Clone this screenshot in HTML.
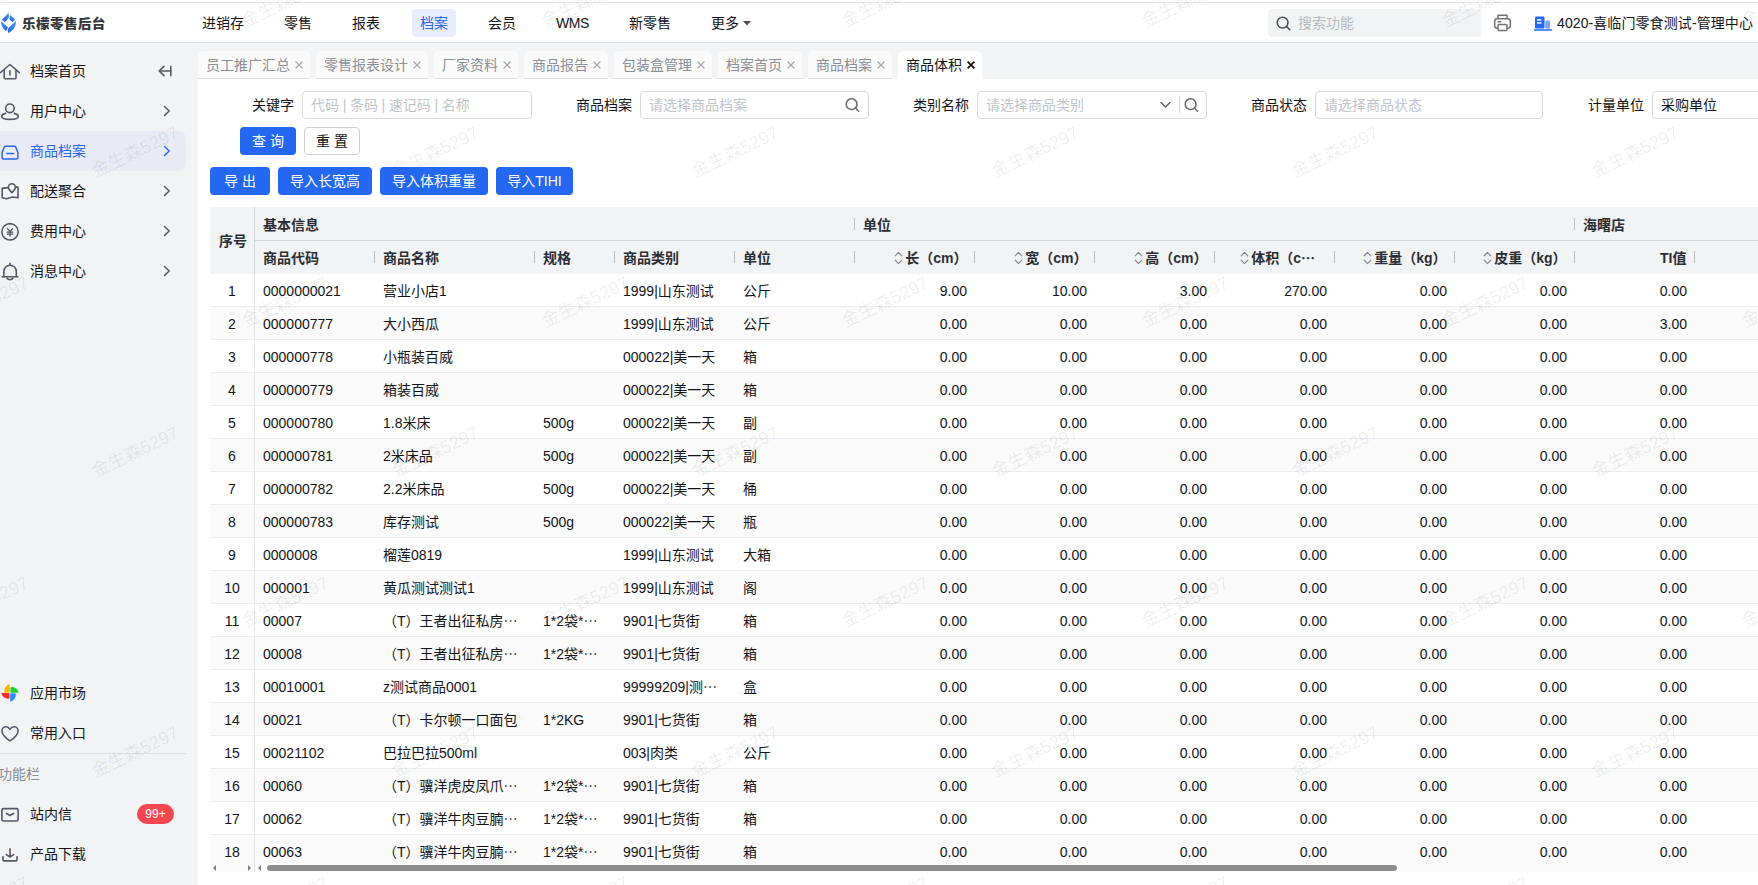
<!DOCTYPE html>
<html lang="zh-CN">
<head>
<meta charset="utf-8">
<title>商品体积</title>
<style>
*{box-sizing:border-box;margin:0;padding:0}
html,body{width:1758px;height:885px;overflow:hidden;background:#fff}
body{position:relative;font-family:"Liberation Sans","Noto Sans CJK SC",sans-serif;font-size:14px;color:#121418;line-height:20px}
.abs{position:absolute}
svg{display:block}
/* header */
#topline{left:0;top:0;width:1758px;height:3px;background:#fff;border-bottom:1px solid #e6e6e7}
#header{left:0;top:3px;width:1758px;height:40px;background:#fff;border-bottom:1px solid #dbdcde}
#logo{left:0;top:9px;width:18px;height:24px}
#brand{left:21.8px;top:12px;font-size:13.4px;font-weight:900;letter-spacing:.3px;color:#333539;line-height:24px;white-space:nowrap;transform:scale(1.02,.96);transform-origin:0 18px}
.nav{top:9px;height:28px;line-height:28px;padding:0 8px;border-radius:4px;white-space:nowrap;color:#121418}
.nav.on{background:#e8edfb;color:#2b67ec}
#search{left:1268px;top:9px;width:213px;height:28px;border-radius:4px;background:#f2f3f5}
#search span{position:absolute;left:30px;top:0;line-height:28px;color:#b5bac3}
#org{left:1557px;top:9px;line-height:28px;white-space:nowrap;color:#121418;letter-spacing:.09px}
/* sidebar */
#side{left:0;top:43px;width:198px;height:842px;background:#f2f3f5}
.mi{left:0;width:186px;height:40px}
.mi .t{position:absolute;left:30px;top:0;line-height:40px;color:#121418;white-space:nowrap}
.mi .ic{position:absolute;left:0;top:10px;width:20px;height:20px}
.mi .ar{position:absolute;left:160px;top:13px;width:14px;height:14px}
.mi.on{background:#e8ebf6;border-radius:0 8px 8px 0}
.mi.on .t{color:#2b67ec}
/* tabs */
#tabbar{left:198px;top:43px;width:1560px;height:36px;background:#f2f3f5}
.tab{top:51px;height:28px;background:#fafafa;border-radius:5px 5px 0 0;border-bottom:1px solid #dcdee3;color:#8a8f98;line-height:29px;padding-left:8px;white-space:nowrap}
.tab svg{position:absolute;right:7px;top:10px;width:8px;height:8px;fill:none;stroke:#a0a3a8;stroke-width:1.3}
.tab.on{background:#fff;border-bottom-color:#fff;color:#121418}
.tab.on svg{stroke:#111;stroke-width:1.7}
#content{left:198px;top:79px;width:1560px;height:806px;background:#fff}
/* form */
.lb{top:91px;height:28px;line-height:28px;white-space:nowrap;color:#121418;text-align:right}
.ip{top:91px;height:28px;border:1px solid #d8d9dc;border-radius:4px;background:#fff;line-height:26px;padding-left:8px;color:#c0c4cc;white-space:nowrap;overflow:hidden}
.btn{height:28px;line-height:28px;border-radius:4px;text-align:center;color:#fff;background:#2468f2;white-space:nowrap}
.btn.w{background:#fff;color:#121418;border:1px solid #c9cdd4;line-height:26px}
/* table */
#thead{left:210px;top:207px;width:1548px;height:67px;background:#f2f3f5}
.th{position:absolute;font-weight:bold;color:#2a2d33;white-space:nowrap;line-height:33px;height:33px}
.sep{position:absolute;width:1px;height:12px;background:#bdc1c8}
.tr{position:absolute;left:210px;width:1548px;height:33px;border-bottom:1px solid #ebecef;line-height:32px;white-space:nowrap}
.tr.even{background:#fafafa}
.c{position:absolute;top:1px;height:31px;overflow:hidden}
.c0{left:0;width:44px;text-align:center}
.c1{left:53px}.c2{left:173px}.c3{left:333px}.c4{left:413px}.c5{left:533px}
.n{width:113px;text-align:right}
.n0{left:644px}.n1{left:764px}.n2{left:884px}.n3{left:1004px}.n4{left:1124px}.n5{left:1244px}.n6{left:1364px}
.el{font-family:"Noto Sans CJK SC",sans-serif;line-height:0}
.wm{position:absolute;width:120px;height:24px;text-align:center;color:rgba(0,0,0,.075);font-size:18px;transform:rotate(-25.5deg);transform-origin:center;white-space:nowrap;pointer-events:none;line-height:24px;z-index:9}
</style>
</head>
<body>
<div id="topline" class="abs"></div>
<div id="header" class="abs"></div>

<svg id="logo" class="abs" style="left:0;top:12px;width:18px;height:22px" viewBox="0 0 18 22">
<defs><linearGradient id="lg" x1="0" y1="0" x2="0" y2="1"><stop offset="0" stop-color="#4c93fb"/><stop offset="1" stop-color="#2468f2"/></linearGradient></defs>
<path d="M8.7 0.8 L1.9 7.4 L4.4 9.9 C6.8 8.6 8.5 6.6 8.9 4.4 Z" fill="url(#lg)"/>
<path d="M10.2 2.7 L15 7.4 L12.7 9.9 C11 9.1 9.7 7.9 9.3 6.5 Z" fill="url(#lg)"/>
<path d="M1.1 8.9 C0.8 13 3.3 17.2 6.4 19.1 L7.9 15.3 Z" fill="url(#lg)"/>
<path d="M15.9 8.9 C16.4 14 12.8 19 8.3 21 C7.7 18.8 7.7 17.6 8.1 16.3 Z" fill="url(#lg)"/>
</svg>
<div id="brand" class="abs">乐檬零售后台</div>
<div class="abs nav" style="left:194px">进销存</div>
<div class="abs nav" style="left:276px">零售</div>
<div class="abs nav" style="left:344px">报表</div>
<div class="abs nav on" style="left:412px">档案</div>
<div class="abs nav" style="left:480px">会员</div>
<div class="abs nav" style="left:548px;letter-spacing:-.45px">WMS</div>
<div class="abs nav" style="left:621px">新零售</div>
<div class="abs nav" style="left:703px">更多<svg class="abs" style="left:39.5px;top:11.5px;width:8px;height:5px" viewBox="0 0 8 5"><path d="M0 0H8L4 4.6Z" fill="#4a4c52"/></svg></div>
<div id="search" class="abs"><svg class="abs" style="left:7.5px;top:6.5px;width:15px;height:15px" viewBox="0 0 15 15" fill="none" stroke="#4a4d54" stroke-width="1.5"><circle cx="6.6" cy="6.6" r="5.4"/><path d="M10.6 10.6L13.8 13.8" stroke-linecap="round"/></svg><span>搜索功能</span></div>
<svg class="abs" style="left:1493px;top:13px;width:19px;height:19px" viewBox="0 0 19 19" fill="none" stroke="#6f7277" stroke-width="1.5" stroke-linejoin="round"><path d="M5 5.8V2.2h9v3.6"/><rect x="1.7" y="5.8" width="15.6" height="9.4" rx="2.4"/><rect x="5" y="11.4" width="9" height="6.2" rx="1" fill="#fff"/><path d="M5.2 8.7h2.6" stroke-linecap="round"/></svg>
<svg class="abs" style="left:1534px;top:16px;width:18px;height:15px" viewBox="0 0 18 15"><rect x="1" y="0.5" width="9.5" height="12" rx="1.2" fill="#2468f2"/><rect x="11.2" y="4.5" width="4.8" height="8" rx="1" fill="#7aa6f8"/><rect x="3" y="3.2" width="4.5" height="1.4" fill="#fff"/><rect x="3" y="6.2" width="4.5" height="1.4" fill="#fff"/><rect x="0" y="13.2" width="18" height="1.5" fill="#2468f2"/></svg>
<div id="org" class="abs">4020-喜临门零食测试-管理中心</div>

<div id="side" class="abs"></div>

<div class="abs mi" style="top:51px"><svg class="ic" viewBox="0 0 20 20" fill="none" stroke="#545866" stroke-width="1.6" stroke-linecap="round" stroke-linejoin="round"><path d="M0.4 11.7L9.9 3.5L19.4 11.7"/><path d="M4.2 9.6V16.7a1 1 0 0 0 1 1H15a1 1 0 0 0 1-1V9.6"/><path d="M9.9 9.7V14"/></svg><span class="t">档案首页</span><svg class="abs" style="left:158px;top:14px;width:14px;height:12px" viewBox="0 0 14 12" fill="none" stroke="#56585e" stroke-width="1.6" stroke-linecap="round" stroke-linejoin="round"><path d="M6 1.4L1.2 6L6 10.6"/><path d="M1.6 6H12.8"/><path d="M12.8 1.4V10.6"/></svg></div>
<div class="abs mi" style="top:91px"><svg class="ic" viewBox="0 0 20 20" fill="none" stroke="#545866" stroke-width="1.6" stroke-linecap="round" stroke-linejoin="round"><circle cx="9.9" cy="7.3" r="4.3"/><path d="M5.6 12.4C3 13 1.7 14.2 1.7 15.5C1.7 17.2 5 18.4 10 18.4S18.3 17.2 18.3 15.5C18.3 14.2 17 13 14.4 12.4"/></svg><span class="t">用户中心</span><svg class="ar" viewBox="0 0 14 14" fill="none" stroke="#56585e" stroke-width="1.5" stroke-linecap="round" stroke-linejoin="round"><path d="M4.5 2.5L9.2 7L4.5 11.5"/></svg></div>
<div class="abs mi on" style="top:131px"><svg class="ic" viewBox="0 0 20 20" fill="none" stroke="#2b67ec" stroke-width="1.5" stroke-linecap="round" stroke-linejoin="round"><path d="M5.7 5.3H14.3a1.6 1.6 0 0 1 1.5 1L17.9 11.5V16.4a1.5 1.5 0 0 1-1.5 1.5H3.6a1.5 1.5 0 0 1-1.5-1.5V11.5L4.2 6.3a1.6 1.6 0 0 1 1.5-1Z"/><path d="M6.6 12.4H13.6"/></svg><span class="t">商品档案</span><svg class="ar" viewBox="0 0 14 14" fill="none" stroke="#2b67ec" stroke-width="1.5" stroke-linecap="round" stroke-linejoin="round"><path d="M4.5 2.5L9.2 7L4.5 11.5"/></svg></div>
<div class="abs mi" style="top:171px"><svg class="ic" viewBox="0 0 20 20" fill="none" stroke="#545866" stroke-width="1.6" stroke-linecap="round" stroke-linejoin="round"><path d="M7.6 6.6L2.2 7.4V16.8L6.4 17.8L12.8 16L18 16.8V6.4L16 5.9"/><path d="M11.9 11.6C9.6 9.4 8.4 8 8.4 6.2A3.5 3.5 0 0 1 15.4 6.2C15.4 8 14.2 9.4 11.9 11.6Z"/></svg><span class="t">配送聚合</span><svg class="ar" viewBox="0 0 14 14" fill="none" stroke="#56585e" stroke-width="1.5" stroke-linecap="round" stroke-linejoin="round"><path d="M4.5 2.5L9.2 7L4.5 11.5"/></svg></div>
<div class="abs mi" style="top:211px"><svg class="ic" viewBox="0 0 20 20" fill="none" stroke="#545866" stroke-width="1.6" stroke-linecap="round" stroke-linejoin="round"><circle cx="10" cy="10.8" r="8.2"/><path d="M7.5 7.6L10 10.6L12.5 7.6M10 10.6V15.2M7.2 11.2H12.8M7.2 13.1H12.8" stroke-width="1.3"/></svg><span class="t">费用中心</span><svg class="ar" viewBox="0 0 14 14" fill="none" stroke="#56585e" stroke-width="1.5" stroke-linecap="round" stroke-linejoin="round"><path d="M4.5 2.5L9.2 7L4.5 11.5"/></svg></div>
<div class="abs mi" style="top:251px"><svg class="ic" viewBox="0 0 20 20" fill="none" stroke="#545866" stroke-width="1.6" stroke-linecap="round" stroke-linejoin="round"><path d="M10 2.4V4"/><path d="M3.9 15.7V10.4A6.2 6.2 0 0 1 16.3 10.4V15.7"/><path d="M2.2 15.7H17.8"/><path d="M7 17.2C7.6 18.3 8.8 18.7 10 18.7S12.4 18.3 13 17.2"/></svg><span class="t">消息中心</span><svg class="ar" viewBox="0 0 14 14" fill="none" stroke="#56585e" stroke-width="1.5" stroke-linecap="round" stroke-linejoin="round"><path d="M4.5 2.5L9.2 7L4.5 11.5"/></svg></div>

<div class="abs mi" style="top:673px"><svg class="ic" viewBox="0 0 20 20"><g id="pw"><path id="pt" d="M9.8 1.2V8.4C9.8 9 9.4 9.4 8.8 9.4H5.2C4.4 9.4 4.2 8.8 4.2 8C4.2 4.6 6.6 1.8 9.8 1.2Z" fill="#ffb400"/><path d="M9.8 1.2V8.4C9.8 9 9.4 9.4 8.8 9.4H5.2C4.4 9.4 4.2 8.8 4.2 8C4.2 4.6 6.6 1.8 9.8 1.2Z" fill="#22d12c" transform="rotate(90 10 9.85)"/><path d="M9.8 1.2V8.4C9.8 9 9.4 9.4 8.8 9.4H5.2C4.4 9.4 4.2 8.8 4.2 8C4.2 4.6 6.6 1.8 9.8 1.2Z" fill="#2f8ffa" transform="rotate(180 10 9.85)"/><path d="M9.8 1.2V8.4C9.8 9 9.4 9.4 8.8 9.4H5.2C4.4 9.4 4.2 8.8 4.2 8C4.2 4.6 6.6 1.8 9.8 1.2Z" fill="#ff2b2b" transform="rotate(270 10 9.85)"/></g></svg><span class="t">应用市场</span></div>
<div class="abs mi" style="top:713px"><svg class="ic" viewBox="0 0 20 20" fill="none" stroke="#545866" stroke-width="1.6" stroke-linecap="round" stroke-linejoin="round"><path d="M10 17.9C5.4 14.7 1.9 11.5 1.9 7.9C1.9 5.3 3.9 3.7 5.9 3.7C7.6 3.7 9.1 4.7 10 6.3C10.9 4.7 12.4 3.7 14.1 3.7C16.1 3.7 18.1 5.3 18.1 7.9C18.1 11.5 14.6 14.7 10 17.9Z"/></svg><span class="t">常用入口</span></div>
<div class="abs" style="left:0;top:753px;width:186px;height:1px;background:#dcdee3"></div>
<div class="abs" style="left:-2px;top:764px;line-height:20px;color:#8a8d93">功能栏</div>
<div class="abs mi" style="top:794px"><svg class="ic" viewBox="0 0 20 20" fill="none" stroke="#545866" stroke-width="1.6" stroke-linecap="round" stroke-linejoin="round"><rect x="1.9" y="4.6" width="16.2" height="12.4" rx="1.6"/><path d="M6.4 9.5L10 11.5L13.6 9.5"/></svg><span class="t">站内信</span><span class="abs" style="left:137px;top:10px;width:37px;height:20px;border-radius:10px;background:#f5474f;color:#fff;font-size:12px;line-height:20px;text-align:center">99+</span></div>
<div class="abs mi" style="top:834px"><svg class="ic" viewBox="0 0 20 20" fill="none" stroke="#545866" stroke-width="1.6" stroke-linecap="round" stroke-linejoin="round"><path d="M10 4.8V12.8M6.4 10.6L10 13L13.6 10.6"/><path d="M3 12.8V15.9a1 1 0 0 0 1 1H16a1 1 0 0 0 1-1V12.8"/></svg><span class="t">产品下载</span></div>

<div id="tabbar" class="abs"></div>
<div id="content" class="abs"></div>
<div class="abs tab" style="left:198px;width:112px">员工推广汇总<svg viewBox="0 0 8 8"><path d="M0.6 0.6L7.4 7.4M7.4 0.6L0.6 7.4"/></svg></div>
<div class="abs tab" style="left:316px;width:112px">零售报表设计<svg viewBox="0 0 8 8"><path d="M0.6 0.6L7.4 7.4M7.4 0.6L0.6 7.4"/></svg></div>
<div class="abs tab" style="left:434px;width:84px">厂家资料<svg viewBox="0 0 8 8"><path d="M0.6 0.6L7.4 7.4M7.4 0.6L0.6 7.4"/></svg></div>
<div class="abs tab" style="left:524px;width:84px">商品报告<svg viewBox="0 0 8 8"><path d="M0.6 0.6L7.4 7.4M7.4 0.6L0.6 7.4"/></svg></div>
<div class="abs tab" style="left:614px;width:98px">包装盒管理<svg viewBox="0 0 8 8"><path d="M0.6 0.6L7.4 7.4M7.4 0.6L0.6 7.4"/></svg></div>
<div class="abs tab" style="left:718px;width:84px">档案首页<svg viewBox="0 0 8 8"><path d="M0.6 0.6L7.4 7.4M7.4 0.6L0.6 7.4"/></svg></div>
<div class="abs tab" style="left:808px;width:84px">商品档案<svg viewBox="0 0 8 8"><path d="M0.6 0.6L7.4 7.4M7.4 0.6L0.6 7.4"/></svg></div>
<div class="abs tab on" style="left:898px;width:84px">商品体积<svg viewBox="0 0 8 8"><path d="M0.6 0.6L7.4 7.4M7.4 0.6L0.6 7.4"/></svg></div>


<div class="abs lb" style="left:214px;width:80px">关键字</div>
<div class="abs ip" style="left:302px;width:230px;word-spacing:-.25px">代码 | 条码 | 速记码 | 名称</div>
<div class="abs lb" style="left:552px;width:80px">商品档案</div>
<div class="abs ip" style="left:640px;width:229px">请选择商品档案</div><svg class="abs" style="left:845px;top:98px;width:15px;height:15px" viewBox="0 0 15 15" fill="none" stroke="#65676b" stroke-width="1.5" stroke-linecap="round"><circle cx="6.6" cy="6.2" r="5.4"/><path d="M10.6 10.2L13.6 13.2"/></svg>
<div class="abs lb" style="left:889px;width:80px">类别名称</div>
<div class="abs ip" style="left:977px;width:230px">请选择商品类别</div>
<svg class="abs" style="left:1159.7px;top:101px;width:11px;height:8px" viewBox="0 0 11 8" fill="none" stroke="#5c5e63" stroke-width="1.4" stroke-linecap="round" stroke-linejoin="round"><path d="M1 1.4L5.5 6L10 1.4"/></svg>
<div class="abs" style="left:1179px;top:97px;width:1px;height:16px;background:#d2d3d6"></div><svg class="abs" style="left:1184px;top:98px;width:15px;height:15px" viewBox="0 0 15 15" fill="none" stroke="#65676b" stroke-width="1.5" stroke-linecap="round"><circle cx="6.6" cy="6.2" r="5.4"/><path d="M10.6 10.2L13.6 13.2"/></svg>
<div class="abs lb" style="left:1227px;width:80px">商品状态</div>
<div class="abs ip" style="left:1315px;width:228px">请选择商品状态</div>
<div class="abs lb" style="left:1564px;width:80px">计量单位</div>
<div class="abs ip" style="left:1652px;width:230px;color:#121418">采购单位</div>
<div class="abs btn" style="left:240px;top:127px;width:56px">查 询</div>
<div class="abs btn w" style="left:304px;top:127px;width:56px">重 置</div>
<div class="abs btn" style="left:210px;top:167px;width:60px">导 出</div>
<div class="abs btn" style="left:278px;top:167px;width:94px">导入长宽高</div>
<div class="abs btn" style="left:380px;top:167px;width:108px">导入体积重量</div>
<div class="abs btn" style="left:496px;top:167px;width:77px">导入TIHI</div>

<div id="thead" class="abs">
<div class="abs" style="left:0;top:33px;width:44px;height:1px;background:#f2f3f5"></div><div class="abs" style="left:44px;top:33px;width:1504px;height:1px;background:#d3d6dc"></div><div class="abs" style="left:44px;top:0;width:1px;height:67px;background:#cfd2d8"></div><span class="th" style="left:9px;top:18px">序号</span><span class="th" style="left:53px;top:2px">基本信息</span><span class="th" style="left:653px;top:2px">单位</span><span class="th" style="left:1373px;top:2px">海曙店</span><i class="sep" style="left:644px;top:11px"></i><i class="sep" style="left:1364px;top:11px"></i><span class="th" style="left:53px;top:35px">商品代码</span><span class="th" style="left:173px;top:35px">商品名称</span><span class="th" style="left:333px;top:35px">规格</span><span class="th" style="left:413px;top:35px">商品类别</span><span class="th" style="left:533px;top:35px">单位</span><i class="sep" style="left:164px;top:44px"></i><i class="sep" style="left:324px;top:44px"></i><i class="sep" style="left:404px;top:44px"></i><i class="sep" style="left:524px;top:44px"></i><i class="sep" style="left:644px;top:44px"></i><i class="sep" style="left:764px;top:44px"></i><i class="sep" style="left:884px;top:44px"></i><i class="sep" style="left:1004px;top:44px"></i><i class="sep" style="left:1124px;top:44px"></i><i class="sep" style="left:1244px;top:44px"></i><i class="sep" style="left:1364px;top:44px"></i><i class="sep" style="left:1484px;top:44px"></i><span class="th" style="right:790.5px;top:35px;padding-left:11px"><svg style="position:absolute;left:-0.5px;top:9px;width:9px;height:14px" viewBox="0 0 9 14" fill="none" stroke="#85898f" stroke-width="1.2" stroke-linecap="round" stroke-linejoin="round"><path d="M1.2 4.8L4.5 1.4L7.8 4.8M1.2 9.2L4.5 12.6L7.8 9.2"/></svg>长（cm）</span><span class="th" style="right:670.5px;top:35px;padding-left:11px"><svg style="position:absolute;left:-0.5px;top:9px;width:9px;height:14px" viewBox="0 0 9 14" fill="none" stroke="#85898f" stroke-width="1.2" stroke-linecap="round" stroke-linejoin="round"><path d="M1.2 4.8L4.5 1.4L7.8 4.8M1.2 9.2L4.5 12.6L7.8 9.2"/></svg>宽（cm）</span><span class="th" style="right:550.5px;top:35px;padding-left:11px"><svg style="position:absolute;left:-0.5px;top:9px;width:9px;height:14px" viewBox="0 0 9 14" fill="none" stroke="#85898f" stroke-width="1.2" stroke-linecap="round" stroke-linejoin="round"><path d="M1.2 4.8L4.5 1.4L7.8 4.8M1.2 9.2L4.5 12.6L7.8 9.2"/></svg>高（cm）</span><span class="th" style="right:443px;top:35px;padding-left:11px"><svg style="position:absolute;left:-0.5px;top:9px;width:9px;height:14px" viewBox="0 0 9 14" fill="none" stroke="#85898f" stroke-width="1.2" stroke-linecap="round" stroke-linejoin="round"><path d="M1.2 4.8L4.5 1.4L7.8 4.8M1.2 9.2L4.5 12.6L7.8 9.2"/></svg>体积（c<span class="el">…</span></span><span class="th" style="right:311.5px;top:35px;padding-left:11px"><svg style="position:absolute;left:-0.5px;top:9px;width:9px;height:14px" viewBox="0 0 9 14" fill="none" stroke="#85898f" stroke-width="1.2" stroke-linecap="round" stroke-linejoin="round"><path d="M1.2 4.8L4.5 1.4L7.8 4.8M1.2 9.2L4.5 12.6L7.8 9.2"/></svg>重量（kg）</span><span class="th" style="right:191.5px;top:35px;padding-left:11px"><svg style="position:absolute;left:-0.5px;top:9px;width:9px;height:14px" viewBox="0 0 9 14" fill="none" stroke="#85898f" stroke-width="1.2" stroke-linecap="round" stroke-linejoin="round"><path d="M1.2 4.8L4.5 1.4L7.8 4.8M1.2 9.2L4.5 12.6L7.8 9.2"/></svg>皮重（kg）</span><span class="th" style="right:71.5px;top:35px">TI值</span>
</div>
<div class="abs" style="left:254px;top:274px;width:1px;height:598px;background:#e4e6ea;z-index:3"></div>
<div class="tr odd" style="top:274px"><span class="c c0">1</span><span class="c c1">0000000021</span><span class="c c2">营业小店1</span><span class="c c3"></span><span class="c c4">1999|山东测试</span><span class="c c5">公斤</span><span class="c n n0">9.00</span><span class="c n n1">10.00</span><span class="c n n2">3.00</span><span class="c n n3">270.00</span><span class="c n n4">0.00</span><span class="c n n5">0.00</span><span class="c n n6">0.00</span></div>
<div class="tr even" style="top:307px"><span class="c c0">2</span><span class="c c1">000000777</span><span class="c c2">大小西瓜</span><span class="c c3"></span><span class="c c4">1999|山东测试</span><span class="c c5">公斤</span><span class="c n n0">0.00</span><span class="c n n1">0.00</span><span class="c n n2">0.00</span><span class="c n n3">0.00</span><span class="c n n4">0.00</span><span class="c n n5">0.00</span><span class="c n n6">3.00</span></div>
<div class="tr odd" style="top:340px"><span class="c c0">3</span><span class="c c1">000000778</span><span class="c c2">小瓶装百威</span><span class="c c3"></span><span class="c c4">000022|美一天</span><span class="c c5">箱</span><span class="c n n0">0.00</span><span class="c n n1">0.00</span><span class="c n n2">0.00</span><span class="c n n3">0.00</span><span class="c n n4">0.00</span><span class="c n n5">0.00</span><span class="c n n6">0.00</span></div>
<div class="tr even" style="top:373px"><span class="c c0">4</span><span class="c c1">000000779</span><span class="c c2">箱装百威</span><span class="c c3"></span><span class="c c4">000022|美一天</span><span class="c c5">箱</span><span class="c n n0">0.00</span><span class="c n n1">0.00</span><span class="c n n2">0.00</span><span class="c n n3">0.00</span><span class="c n n4">0.00</span><span class="c n n5">0.00</span><span class="c n n6">0.00</span></div>
<div class="tr odd" style="top:406px"><span class="c c0">5</span><span class="c c1">000000780</span><span class="c c2">1.8米床</span><span class="c c3">500g</span><span class="c c4">000022|美一天</span><span class="c c5">副</span><span class="c n n0">0.00</span><span class="c n n1">0.00</span><span class="c n n2">0.00</span><span class="c n n3">0.00</span><span class="c n n4">0.00</span><span class="c n n5">0.00</span><span class="c n n6">0.00</span></div>
<div class="tr even" style="top:439px"><span class="c c0">6</span><span class="c c1">000000781</span><span class="c c2">2米床品</span><span class="c c3">500g</span><span class="c c4">000022|美一天</span><span class="c c5">副</span><span class="c n n0">0.00</span><span class="c n n1">0.00</span><span class="c n n2">0.00</span><span class="c n n3">0.00</span><span class="c n n4">0.00</span><span class="c n n5">0.00</span><span class="c n n6">0.00</span></div>
<div class="tr odd" style="top:472px"><span class="c c0">7</span><span class="c c1">000000782</span><span class="c c2">2.2米床品</span><span class="c c3">500g</span><span class="c c4">000022|美一天</span><span class="c c5">桶</span><span class="c n n0">0.00</span><span class="c n n1">0.00</span><span class="c n n2">0.00</span><span class="c n n3">0.00</span><span class="c n n4">0.00</span><span class="c n n5">0.00</span><span class="c n n6">0.00</span></div>
<div class="tr even" style="top:505px"><span class="c c0">8</span><span class="c c1">000000783</span><span class="c c2">库存测试</span><span class="c c3">500g</span><span class="c c4">000022|美一天</span><span class="c c5">瓶</span><span class="c n n0">0.00</span><span class="c n n1">0.00</span><span class="c n n2">0.00</span><span class="c n n3">0.00</span><span class="c n n4">0.00</span><span class="c n n5">0.00</span><span class="c n n6">0.00</span></div>
<div class="tr odd" style="top:538px"><span class="c c0">9</span><span class="c c1">0000008</span><span class="c c2">榴莲0819</span><span class="c c3"></span><span class="c c4">1999|山东测试</span><span class="c c5">大箱</span><span class="c n n0">0.00</span><span class="c n n1">0.00</span><span class="c n n2">0.00</span><span class="c n n3">0.00</span><span class="c n n4">0.00</span><span class="c n n5">0.00</span><span class="c n n6">0.00</span></div>
<div class="tr even" style="top:571px"><span class="c c0">10</span><span class="c c1">000001</span><span class="c c2">黄瓜测试测试1</span><span class="c c3"></span><span class="c c4">1999|山东测试</span><span class="c c5">阁</span><span class="c n n0">0.00</span><span class="c n n1">0.00</span><span class="c n n2">0.00</span><span class="c n n3">0.00</span><span class="c n n4">0.00</span><span class="c n n5">0.00</span><span class="c n n6">0.00</span></div>
<div class="tr odd" style="top:604px"><span class="c c0">11</span><span class="c c1">00007</span><span class="c c2">（T）王者出征私房<span class="el">…</span></span><span class="c c3">1*2袋*<span class="el">…</span></span><span class="c c4">9901|七货街</span><span class="c c5">箱</span><span class="c n n0">0.00</span><span class="c n n1">0.00</span><span class="c n n2">0.00</span><span class="c n n3">0.00</span><span class="c n n4">0.00</span><span class="c n n5">0.00</span><span class="c n n6">0.00</span></div>
<div class="tr even" style="top:637px"><span class="c c0">12</span><span class="c c1">00008</span><span class="c c2">（T）王者出征私房<span class="el">…</span></span><span class="c c3">1*2袋*<span class="el">…</span></span><span class="c c4">9901|七货街</span><span class="c c5">箱</span><span class="c n n0">0.00</span><span class="c n n1">0.00</span><span class="c n n2">0.00</span><span class="c n n3">0.00</span><span class="c n n4">0.00</span><span class="c n n5">0.00</span><span class="c n n6">0.00</span></div>
<div class="tr odd" style="top:670px"><span class="c c0">13</span><span class="c c1">00010001</span><span class="c c2">z测试商品0001</span><span class="c c3"></span><span class="c c4">99999209|测<span class="el">…</span></span><span class="c c5">盒</span><span class="c n n0">0.00</span><span class="c n n1">0.00</span><span class="c n n2">0.00</span><span class="c n n3">0.00</span><span class="c n n4">0.00</span><span class="c n n5">0.00</span><span class="c n n6">0.00</span></div>
<div class="tr even" style="top:703px"><span class="c c0">14</span><span class="c c1">00021</span><span class="c c2">（T）卡尔顿一口面包</span><span class="c c3">1*2KG</span><span class="c c4">9901|七货街</span><span class="c c5">箱</span><span class="c n n0">0.00</span><span class="c n n1">0.00</span><span class="c n n2">0.00</span><span class="c n n3">0.00</span><span class="c n n4">0.00</span><span class="c n n5">0.00</span><span class="c n n6">0.00</span></div>
<div class="tr odd" style="top:736px"><span class="c c0">15</span><span class="c c1">00021102</span><span class="c c2">巴拉巴拉500ml</span><span class="c c3"></span><span class="c c4">003|肉类</span><span class="c c5">公斤</span><span class="c n n0">0.00</span><span class="c n n1">0.00</span><span class="c n n2">0.00</span><span class="c n n3">0.00</span><span class="c n n4">0.00</span><span class="c n n5">0.00</span><span class="c n n6">0.00</span></div>
<div class="tr even" style="top:769px"><span class="c c0">16</span><span class="c c1">00060</span><span class="c c2">（T）骥洋虎皮凤爪<span class="el">…</span></span><span class="c c3">1*2袋*<span class="el">…</span></span><span class="c c4">9901|七货街</span><span class="c c5">箱</span><span class="c n n0">0.00</span><span class="c n n1">0.00</span><span class="c n n2">0.00</span><span class="c n n3">0.00</span><span class="c n n4">0.00</span><span class="c n n5">0.00</span><span class="c n n6">0.00</span></div>
<div class="tr odd" style="top:802px"><span class="c c0">17</span><span class="c c1">00062</span><span class="c c2">（T）骥洋牛肉豆腩<span class="el">…</span></span><span class="c c3">1*2袋*<span class="el">…</span></span><span class="c c4">9901|七货街</span><span class="c c5">箱</span><span class="c n n0">0.00</span><span class="c n n1">0.00</span><span class="c n n2">0.00</span><span class="c n n3">0.00</span><span class="c n n4">0.00</span><span class="c n n5">0.00</span><span class="c n n6">0.00</span></div>
<div class="tr even" style="top:835px"><span class="c c0">18</span><span class="c c1">00063</span><span class="c c2">（T）骥洋牛肉豆腩<span class="el">…</span></span><span class="c c3">1*2袋*<span class="el">…</span></span><span class="c c4">9901|七货街</span><span class="c c5">箱</span><span class="c n n0">0.00</span><span class="c n n1">0.00</span><span class="c n n2">0.00</span><span class="c n n3">0.00</span><span class="c n n4">0.00</span><span class="c n n5">0.00</span><span class="c n n6">0.00</span></div>

<div class="abs" style="left:210px;top:866px;width:1548px;height:6px;background:#fafafa;z-index:2"></div>
<div class="abs" style="left:267px;top:865px;width:1130px;height:6px;border-radius:3px;background:#8c8c8c;z-index:4"></div>
<svg class="abs" style="left:212px;top:864px;width:50px;height:8px;z-index:4" viewBox="0 0 50 8" fill="#7d7d7d"><path d="M1 4L4 1V7Z"/><path d="M39 4L36 1V7Z"/><path d="M46 4L49 1V7Z"/></svg>

<div class="wm" style="left:-75px;top:-10px">金生森5297</div>
<div class="wm" style="left:-75px;top:290px">金生森5297</div>
<div class="wm" style="left:-75px;top:590px">金生森5297</div>
<div class="wm" style="left:-75px;top:890px">金生森5297</div>
<div class="wm" style="left:75px;top:140px">金生森5297</div>
<div class="wm" style="left:75px;top:440px">金生森5297</div>
<div class="wm" style="left:75px;top:740px">金生森5297</div>
<div class="wm" style="left:225px;top:-10px">金生森5297</div>
<div class="wm" style="left:225px;top:290px">金生森5297</div>
<div class="wm" style="left:225px;top:590px">金生森5297</div>
<div class="wm" style="left:225px;top:890px">金生森5297</div>
<div class="wm" style="left:375px;top:140px">金生森5297</div>
<div class="wm" style="left:375px;top:440px">金生森5297</div>
<div class="wm" style="left:375px;top:740px">金生森5297</div>
<div class="wm" style="left:525px;top:-10px">金生森5297</div>
<div class="wm" style="left:525px;top:290px">金生森5297</div>
<div class="wm" style="left:525px;top:590px">金生森5297</div>
<div class="wm" style="left:525px;top:890px">金生森5297</div>
<div class="wm" style="left:675px;top:140px">金生森5297</div>
<div class="wm" style="left:675px;top:440px">金生森5297</div>
<div class="wm" style="left:675px;top:740px">金生森5297</div>
<div class="wm" style="left:825px;top:-10px">金生森5297</div>
<div class="wm" style="left:825px;top:290px">金生森5297</div>
<div class="wm" style="left:825px;top:590px">金生森5297</div>
<div class="wm" style="left:825px;top:890px">金生森5297</div>
<div class="wm" style="left:975px;top:140px">金生森5297</div>
<div class="wm" style="left:975px;top:440px">金生森5297</div>
<div class="wm" style="left:975px;top:740px">金生森5297</div>
<div class="wm" style="left:1125px;top:-10px">金生森5297</div>
<div class="wm" style="left:1125px;top:290px">金生森5297</div>
<div class="wm" style="left:1125px;top:590px">金生森5297</div>
<div class="wm" style="left:1125px;top:890px">金生森5297</div>
<div class="wm" style="left:1275px;top:140px">金生森5297</div>
<div class="wm" style="left:1275px;top:440px">金生森5297</div>
<div class="wm" style="left:1275px;top:740px">金生森5297</div>
<div class="wm" style="left:1425px;top:-10px">金生森5297</div>
<div class="wm" style="left:1425px;top:290px">金生森5297</div>
<div class="wm" style="left:1425px;top:590px">金生森5297</div>
<div class="wm" style="left:1425px;top:890px">金生森5297</div>
<div class="wm" style="left:1575px;top:140px">金生森5297</div>
<div class="wm" style="left:1575px;top:440px">金生森5297</div>
<div class="wm" style="left:1575px;top:740px">金生森5297</div>
<div class="wm" style="left:1725px;top:-10px">金生森5297</div>
<div class="wm" style="left:1725px;top:290px">金生森5297</div>
<div class="wm" style="left:1725px;top:590px">金生森5297</div>
<div class="wm" style="left:1725px;top:890px">金生森5297</div>
</body>
</html>
